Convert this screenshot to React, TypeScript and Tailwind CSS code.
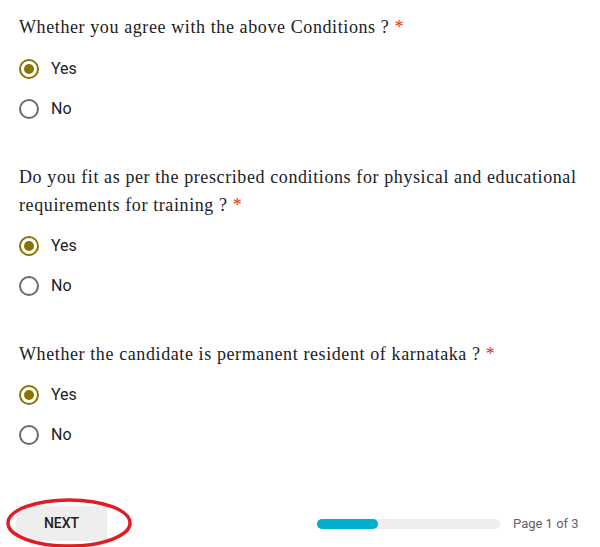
const questions = [
  { id: 1, title: "Whether you agree with the above Conditions ?" },
  {
    id: 2,
    title:
      "Do you fit as per the prescribed conditions for physical and educational requirements for training ?",
  },
  { id: 3, title: "Whether the candidate is permanent resident of karnataka ?" },
];

function Radio({ checked }: { checked: boolean }) {
  return (
    <span
      className={
        "flex h-5 w-5 items-center justify-center rounded-full border-2 " +
        (checked ? "border-[#8a7400]" : "border-[#6b6b6b]")
      }
    >
      {checked && <span className="h-[10px] w-[10px] rounded-full bg-[#8a7400]" />}
    </span>
  );
}

export default function App() {
  return (
    <main className="relative h-[547px] w-[600px] overflow-hidden bg-white pl-[19px] pr-3 pt-[13px]">
      {questions.map((q, i) => (
        <section key={q.id} className={i > 0 ? "mt-[34px]" : ""}>
          <h2 className="font-['Liberation_Serif',serif] text-[18px] leading-[28px] tracking-[0.6px] text-[#202124]">
            {q.title} <span className="text-[#d93025]">*</span>
          </h2>
          <div className={i === 0 ? "mt-[8px]" : "mt-[7px]"}>
            {["Yes", "No"].map((opt) => (
              <label key={opt} className="flex h-10 items-center gap-3">
                <Radio checked={opt === "Yes"} />
                <span className="font-['Roboto',sans-serif] text-[16px] text-[#202124]">{opt}</span>
              </label>
            ))}
          </div>
        </section>
      ))}

      <div className="mt-[51px] flex items-center">
        <div className="relative -ml-[3px]">
          <button className="flex h-[35px] w-[91px] items-center justify-center bg-[#eeeeee] font-['Roboto',sans-serif] text-[14px] font-medium text-[#202124]">
            NEXT
          </button>
          <svg
            className="pointer-events-none absolute left-[-10px] top-[-9px]"
            width="128"
            height="52"
            viewBox="0 0 128 52"
          >
            <ellipse cx="63" cy="26" rx="61" ry="23" fill="none" stroke="#e31b23" strokeWidth="3.5" />
          </svg>
        </div>
        <div className="ml-[210px] flex items-center">
          <div className="h-[10px] w-[183px] rounded-full bg-[#eeeeee]">
            <div className="h-full w-[61px] rounded-full bg-[#00b0d0]" />
          </div>
          <span className="ml-[13px] font-['Roboto',sans-serif] text-[13px] text-[#5f6368]">Page 1 of 3</span>
        </div>
      </div>
    </main>
  );
}
